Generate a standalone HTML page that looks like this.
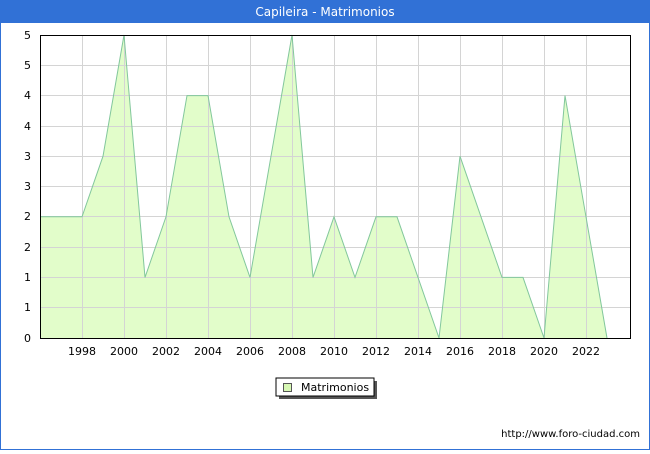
<!DOCTYPE html>
<html><head><style>
body{margin:0;width:650px;height:450px;overflow:hidden;background:#fff;font-family:"DejaVu Sans","Liberation Sans",sans-serif;}
</style></head><body>
<svg width="650" height="450" xmlns="http://www.w3.org/2000/svg" font-family="DejaVu Sans, Liberation Sans, sans-serif">
<rect x="0" y="0" width="650" height="450" fill="#3171d6"/>
<rect x="1" y="23" width="648" height="426" fill="#fff"/>
<text x="325" y="16" fill="#fff" font-size="12" text-anchor="middle">Capileira - Matrimonios</text>
<polygon fill="#e2fdca" stroke="none" points="40,338 40,216.8 61,216.8 82,216.8 103,156.2 124,35 145,277.4 166,216.8 187,95.6 208,95.6 229,216.8 250,277.4 271,156.2 292,35 313,277.4 334,216.8 355,277.4 376,216.8 397,216.8 418,277.4 439,338 460,156.2 481,216.8 502,277.4 523,277.4 544,338 565,95.6 586,216.8 607,338"/>
<g stroke="#d4d4d4" stroke-width="1">
<line x1="40" x2="630" y1="307.5" y2="307.5"/><line x1="40" x2="630" y1="277.5" y2="277.5"/>
<line x1="40" x2="630" y1="247.5" y2="247.5"/><line x1="40" x2="630" y1="216.5" y2="216.5"/>
<line x1="40" x2="630" y1="186.5" y2="186.5"/><line x1="40" x2="630" y1="156.5" y2="156.5"/>
<line x1="40" x2="630" y1="126.5" y2="126.5"/><line x1="40" x2="630" y1="95.5" y2="95.5"/>
<line x1="40" x2="630" y1="65.5" y2="65.5"/>
<line y1="35" y2="338" x1="82.5" x2="82.5"/><line y1="35" y2="338" x1="124.5" x2="124.5"/>
<line y1="35" y2="338" x1="166.5" x2="166.5"/><line y1="35" y2="338" x1="208.5" x2="208.5"/>
<line y1="35" y2="338" x1="250.5" x2="250.5"/><line y1="35" y2="338" x1="292.5" x2="292.5"/>
<line y1="35" y2="338" x1="334.5" x2="334.5"/><line y1="35" y2="338" x1="376.5" x2="376.5"/>
<line y1="35" y2="338" x1="418.5" x2="418.5"/><line y1="35" y2="338" x1="460.5" x2="460.5"/>
<line y1="35" y2="338" x1="502.5" x2="502.5"/><line y1="35" y2="338" x1="544.5" x2="544.5"/>
<line y1="35" y2="338" x1="586.5" x2="586.5"/>
</g>
<polyline fill="none" stroke="#82c79c" stroke-width="1" points="40,216.8 61,216.8 82,216.8 103,156.2 124,35 145,277.4 166,216.8 187,95.6 208,95.6 229,216.8 250,277.4 271,156.2 292,35 313,277.4 334,216.8 355,277.4 376,216.8 397,216.8 418,277.4 439,338 460,156.2 481,216.8 502,277.4 523,277.4 544,338 565,95.6 586,216.8 607,338"/>
<rect x="40.5" y="35.5" width="590" height="303" fill="none" stroke="#000" stroke-width="1"/>
<g font-size="11" fill="#000" text-anchor="end">
<text x="31" y="342">0</text><text x="31" y="311">1</text><text x="31" y="281">1</text>
<text x="31" y="251">2</text><text x="31" y="220">2</text><text x="31" y="190">3</text>
<text x="31" y="160">3</text><text x="31" y="130">4</text><text x="31" y="99">4</text>
<text x="31" y="69">5</text><text x="31" y="39">5</text>
</g>
<g font-size="11" fill="#000" text-anchor="middle">
<text x="82" y="355">1998</text><text x="124" y="355">2000</text><text x="166" y="355">2002</text>
<text x="208" y="355">2004</text><text x="250" y="355">2006</text><text x="292" y="355">2008</text>
<text x="334" y="355">2010</text><text x="376" y="355">2012</text><text x="418" y="355">2014</text>
<text x="460" y="355">2016</text><text x="502" y="355">2018</text><text x="544" y="355">2020</text>
<text x="586" y="355">2022</text>
</g>
<rect x="279" y="381" width="98" height="18" fill="#555"/>
<rect x="276" y="378" width="98" height="18" fill="#fff" stroke="#000" stroke-width="1"/>
<rect x="283.5" y="383.5" width="8" height="8" fill="#d7f8b4" stroke="#555"/>
<text x="301" y="391" font-size="11">Matrimonios</text>
<text x="640" y="437" font-size="10" text-anchor="end">http://www.foro-ciudad.com</text>
</svg>
</body></html>
